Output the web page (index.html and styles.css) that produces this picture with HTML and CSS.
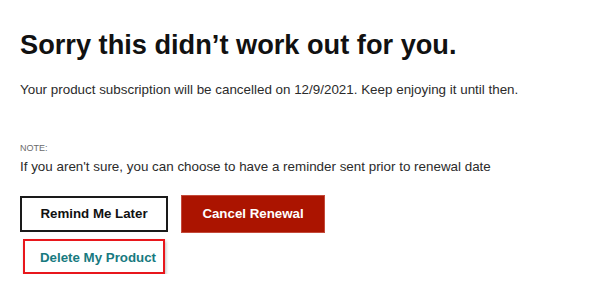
FILE: index.html
```html
<!DOCTYPE html>
<html>
<head>
<meta charset="utf-8">
<link rel="stylesheet" href="styles.css">
</head>
<body>
<main class="page">
  <h1 class="title">Sorry this didn’t work out for you.</h1>
  <p class="lead">Your product subscription will be cancelled on 12/9/2021. Keep enjoying it until then.</p>
  <div class="note">
    <div class="note-label">NOTE:</div>
    <p class="note-text">If you aren't sure, you can choose to have a reminder sent prior to renewal date</p>
  </div>
  <div class="actions">
    <button class="btn btn-outline">Remind Me Later</button>
    <button class="btn btn-primary">Cancel Renewal</button>
  </div>
  <div class="link-row">
    <button class="btn-link">Delete My Product</button>
  </div>
</main>
</body>
</html>
```
FILE: styles.css
```css
html, body {
  margin: 0;
  padding: 0;
  background: #ffffff;
}
body {
  font-family: "Liberation Sans", Arial, sans-serif;
  color: #333333;
}
.page {
  padding: 29px 20px 0 20px;
}
.title {
  margin: 0;
  font-size: 27.2px;
  line-height: 32px;
  font-weight: bold;
  color: #111111;
}
.lead {
  margin: 20px 0 0 0;
  font-size: 13.4px;
  line-height: 18px;
  color: #2b2b2b;
}
.note {
  margin-top: 43px;
}
.note-label {
  font-size: 9px;
  line-height: 12px;
  color: #6b6b6b;
}
.note-text {
  margin: 3.5px 0 0 0;
  font-size: 13.4px;
  line-height: 18px;
  color: #2b2b2b;
}
.actions {
  display: flex;
  align-items: center;
  gap: 13px;
  margin-top: 19px;
}
.btn {
  font-family: "Liberation Sans", Arial, sans-serif;
  font-size: 13.3px;
  font-weight: bold;
  cursor: pointer;
  padding: 0;
}
.btn-outline {
  width: 148px;
  height: 36px;
  background: #ffffff;
  border: 2px solid #1a1a1a;
  color: #111111;
}
.btn-primary {
  width: 144px;
  height: 38px;
  background: #ab1400;
  border: 1px solid #c44a3a;
  color: #ffffff;
}
.link-row {
  margin-top: 6px;
  padding-left: 3px;
}
.btn-link {
  width: 142px;
  height: 35px;
  padding: 3px 0 0 15px;
  text-align: left;
  background: #ffffff;
  border: 2px solid #e8171c;
  box-shadow: 1px 2px 3px rgba(0, 0, 0, 0.25);
  font-family: "Liberation Sans", Arial, sans-serif;
  font-size: 13.3px;
  font-weight: bold;
  color: #187a80;
  cursor: pointer;
}
```
